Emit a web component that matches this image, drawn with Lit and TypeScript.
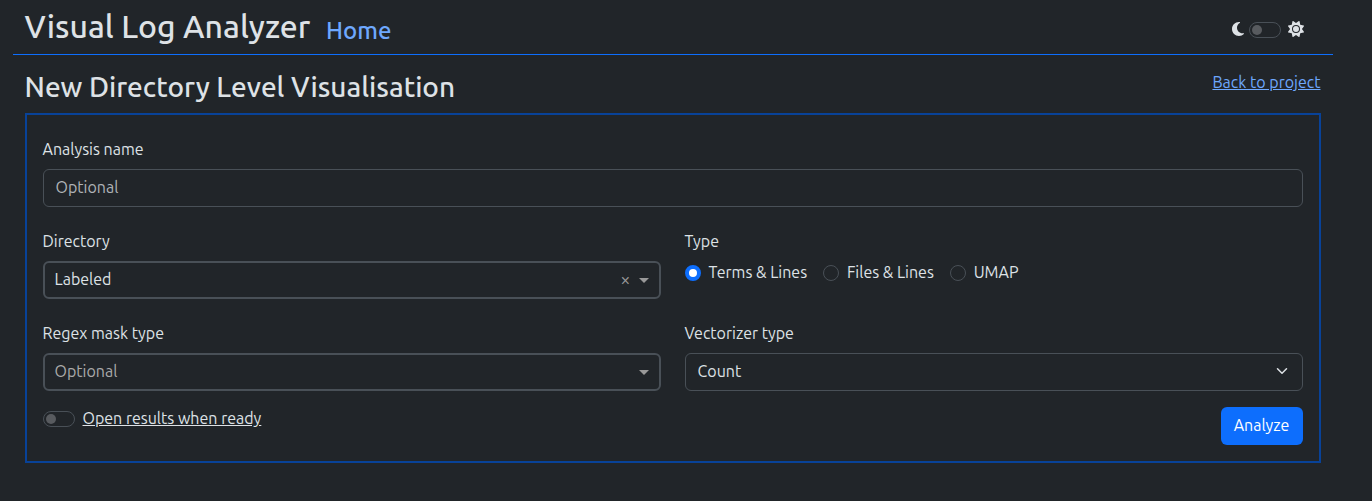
import { LitElement, html, css } from "lit";
import { customElement, state } from "lit/decorators.js";

@customElement("app-root")
export class AppRoot extends LitElement {
  @state() private type = "Terms & Lines";

  static styles = css`
    :host {
      display: block;
      min-height: 501px;
      box-sizing: border-box;
      padding: 0 39px 0 13px;
      background: #212529;
      color: #dee2e6;
      font: 16px/24px "Ubuntu", "Noto Sans", "Open Sans", sans-serif;
      overflow: hidden;
    }
    * { box-sizing: border-box; }
    svg { display: block; flex: none; }
    a { color: #6ea8fe; }
    header {
      display: flex;
      height: 55px;
      padding: 0 28.5px 0 11.5px;
      border-bottom: 1px solid #0d6efd;
      white-space: nowrap;
    }
    .brand { font-size: 32px; font-weight: 500; line-height: 38px; padding-top: 7px; width: 301.5px; }
    .home { font-size: 24px; font-weight: 500; line-height: 30px; padding-top: 16px; text-decoration: none; }
    .theme { display: flex; margin-left: auto; padding-top: 21px; }
    .theme .switch { margin: 1px 7px 0 5px; }
    .theme svg:last-child { margin-right: 0.5px; }
    .switch {
      width: 32px;
      height: 16px;
      flex: none;
      border: 1px solid #495057;
      border-radius: 8px;
      padding: 1.75px;
    }
    .switch::before {
      content: "";
      display: block;
      width: 10.5px;
      height: 10.5px;
      border-radius: 50%;
      background: #585b5f;
    }
    .heading { display: flex; justify-content: space-between; height: 58px; padding: 0 12.5px 0 11.5px; white-space: nowrap; }
    h2 { margin: 0; padding-top: 15px; font-weight: 500; font-size: 28px; line-height: 34px; }
    .back { padding-top: 15px; }
    form {
      margin: 0 12px;
      height: 350px;
      border: 2px solid #084298;
      padding: 22px 16px 16px;
    }
    .grid { display: grid; grid-template-columns: 1fr 1fr; column-gap: 24px; row-gap: 22px; }
    .wide { grid-column: 1 / -1; }
    .label { height: 32px; margin-left: -0.5px; }
    .control {
      display: flex;
      align-items: center;
      height: 38px;
      border: 1px solid #495057;
      border-radius: 6px;
      padding: 0 12px 2px 11.5px;
    }
    .combo { border-width: 2px; padding: 0 10px 2px 9.5px; }
    .muted { color: #afb3b7; }
    .combo .muted { color: #aaa; }
    .end { margin-left: auto; }
    .clear { margin: 0 8.5px 0 auto; color: #999; font-size: 18px; }
    .arrow { margin-top: 3px; }
    .radios { display: flex; height: 24px; margin-top: -1px; }
    .radio { display: flex; margin-right: 16.2px; white-space: nowrap; }
    .dot {
      width: 16px;
      height: 16px;
      margin: 5px 7.6px 0 0;
      border: 1px solid #495057;
      border-radius: 50%;
    }
    .dot.on { border: 4px solid #0d6efd; background: #fff; }
    .footer { display: flex; margin-top: 16px; }
    .footer .switch { margin: 4px 7.5px 0 0; }
    .open { text-decoration: underline; margin-top: -1px; }
    button {
      margin-left: auto;
      width: 82px;
      height: 38px;
      padding: 0 1px 2px 0;
      border: 0;
      border-radius: 6px;
      background: #0d6efd;
      color: #fff;
      font: inherit;
    }
  `;

  private arrow = html`<svg class="arrow" width="10" height="5" viewBox="0 0 10 5"><path d="M0 0h10L5 5z" fill="#999" /></svg>`;

  render() {
    return html`
      <header>
        <div class="brand">Visual Log Analyzer</div>
        <a class="home">Home</a>
        <div class="theme">
          <svg width="12" height="16" viewBox="0 0 384 512" fill="#dee2e6"><path d="M223.5 32C100 32 0 132.300 0 256S100 480 223.500 480c60.600 0 115.500-24.200 155.800-63.400c5-4.900 6.300-12.500 3.100-18.700s-10.100-9.700-17-8.500c-9.800 1.700-19.800 2.600-30.100 2.600c-96.900 0-175.500-78.800-175.500-176c0-65.800 36-123.100 89.300-153.300c6.100-3.500 9.200-10.500 7.700-17.300s-7.300-11.900-14.300-12.500c-6.300-.5-12.600-.8-19-.8z" /></svg>
          <div class="switch"></div>
          <svg width="16" height="16" viewBox="0 0 512 512" fill="#dee2e6"><path d="M361.5 1.200c5 2.100 8.600 6.600 9.600 11.900L391 121l107.900 19.800c5.300 1 9.800 4.600 11.900 9.600s1.500 10.700-1.600 15.200L446.900 256l62.300 90.300c3.100 4.500 3.700 10.200 1.600 15.200s-6.600 8.600-11.900 9.600L391 391 371.100 498.900c-1 5.300-4.600 9.800-9.600 11.900s-10.700 1.500-15.200-1.600L256 446.900l-90.300 62.300c-4.500 3.100-10.200 3.700-15.200 1.600s-8.600-6.600-9.600-11.900L121 391 13.100 371.100c-5.300-1-9.800-4.600-11.900-9.600s-1.500-10.700 1.600-15.200L65.100 256 2.800 165.700c-3.100-4.500-3.700-10.200-1.600-15.200s6.600-8.600 11.900-9.600L121 121 140.900 13.100c1-5.300 4.600-9.800 9.600-11.900s10.700-1.500 15.200 1.600L256 65.100 346.300 2.800c4.500-3.100 10.200-3.700 15.200-1.600zM160 256a96 96 0 1 1 192 0 96 96 0 1 1-192 0zm224 0a128 128 0 1 0-256 0 128 128 0 1 0 256 0z" /></svg>
        </div>
      </header>
      <div class="heading">
        <h2>New Directory Level Visualisation</h2>
        <a class="back" href="#">Back to project</a>
      </div>
      <form>
        <div class="grid">
          <div class="wide">
            <div class="label">Analysis name</div>
            <div class="control"><span class="muted">Optional</span></div>
          </div>
          <div>
            <div class="label">Directory</div>
            <div class="control combo">
              <span>Labeled</span>
              <span class="clear">×</span>
              ${this.arrow}
            </div>
          </div>
          <div>
            <div class="label">Type</div>
            <div class="radios">
              ${["Terms & Lines", "Files & Lines", "UMAP"].map(
                (t) => html`<div class="radio" @click=${() => (this.type = t)}>
                  <div class="dot ${t === this.type ? "on" : ""}"></div><span>${t}</span>
                </div>`
              )}
            </div>
          </div>
          <div>
            <div class="label">Regex mask type</div>
            <div class="control combo"><span class="muted">Optional</span><span class="end">${this.arrow}</span></div>
          </div>
          <div>
            <div class="label">Vectorizer type</div>
            <div class="control">
              <span>Count</span>
              <svg class="end" width="16" height="12" viewBox="0 0 16 16"><path d="m2 5 6 6 6-6" fill="none" stroke="#dee2e6" stroke-width="2" stroke-linecap="round" stroke-linejoin="round" /></svg>
            </div>
          </div>
        </div>
        <div class="footer">
          <div class="switch"></div>
          <span class="open">Open results when ready</span>
          <button type="button">Analyze</button>
        </div>
      </form>
    `;
  }
}
